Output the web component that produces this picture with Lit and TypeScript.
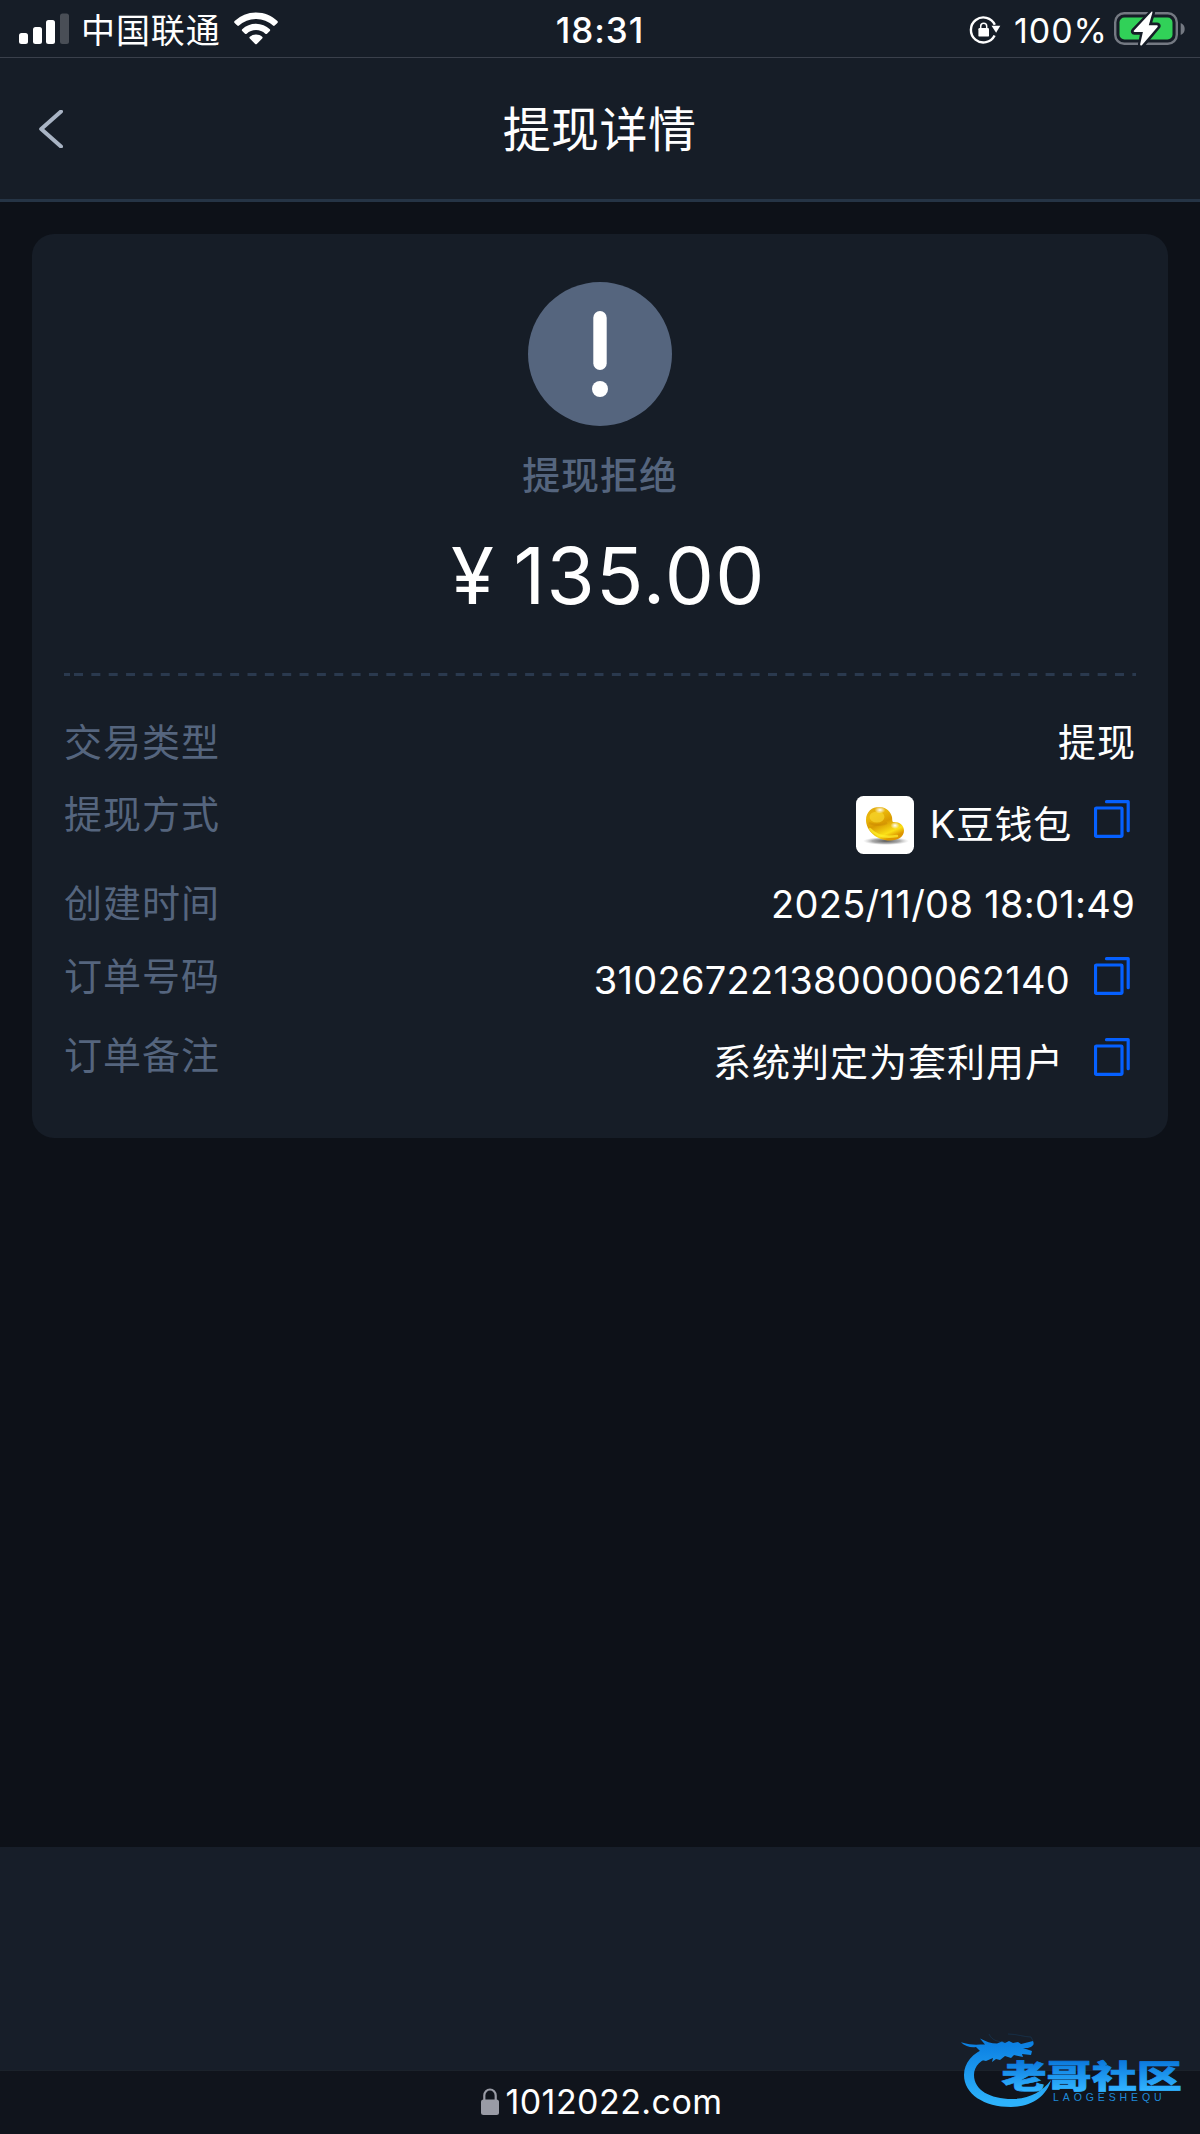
import { css, html, svg, LitElement, nothing } from "lit";
import { customElement, property } from "lit/decorators.js";

@customElement("status-bar")
export class StatusBar extends LitElement {
  render() {
    return html`
      <div class="side">
        <svg class="signal" width="50" height="32" viewBox="0 0 50 32">
          <rect x="0" y="20" width="9" height="11" rx="2.5" />
          <rect x="14" y="14" width="9" height="17" rx="2.5" />
          <rect x="27" y="7" width="9" height="24" rx="2.5" />
          <rect x="41" y="0.5" width="9" height="30.5" rx="2.5" opacity="0.22" />
        </svg>
        <span class="carrier">中国联通</span>
        <svg class="wifi" width="44" height="33" viewBox="0 0 44 33">
          <path d="M22 .5c8.500 0 16 3.300 21.400 8.600.6.600.6 1.200 0 1.800l-2.700 2.700c-.5.500-1.100.5-1.700 0A24.300 24.300 0 0 0 22 6.900 24.300 24.300 0 0 0 5 13.600c-.6.500-1.200.5-1.700 0L.6 10.900c-.6-.6-.6-1.200 0-1.800A30.500 30.500 0 0 1 22 .5z" />
          <path d="M22 11.700c5.400 0 10.200 2.100 13.800 5.500.6.600.6 1.200 0 1.800L33 21.700c-.5.500-1.100.5-1.700 0a13.600 13.600 0 0 0-18.600 0c-.6.500-1.200.5-1.700 0L8.200 19c-.6-.6-.6-1.200 0-1.800a20 20 0 0 1 13.800-5.500z" />
          <path d="M22 22.500c2.400 0 4.600.9 6.200 2.300.6.500.6 1.100 0 1.700l-5.400 5.400c-.5.500-1.100.5-1.600 0l-5.400-5.400c-.6-.6-.6-1.200 0-1.700a9.300 9.300 0 0 1 6.200-2.300z" />
        </svg>
      </div>
      <div class="time">18:31</div>
      <div class="side end">
        <svg class="lock" width="32" height="30" viewBox="0 0 32 30">
          <path d="M25.600 20.500A12.500 12.500 0 1 1 25.800 9.800" fill="none" stroke="#fff" stroke-width="2.400" />
          <path d="M22.500 10.800h8.800l-4.200 7z" />
          <rect x="9.400" y="13" width="10.600" height="8.600" rx="1.200" />
          <path d="M11.700 13.500v-2.300a3 3 0 0 1 6 0v2.300" fill="none" stroke="#fff" stroke-width="1.500" />
        </svg>
        <span class="percent">100%</span>
        <svg class="battery" width="72" height="36" viewBox="0 0 72 36">
          <rect x="1.200" y="2.200" width="61.600" height="30.600" rx="9" fill="none" stroke="#747982" stroke-width="2.400" />
          <rect x="5.500" y="6.500" width="53" height="22" rx="5" fill="#31d158" />
          <path d="M66.700 12v12c2.500-1 4-3.300 4-6s-1.500-5-4-6z" fill="#747982" />
          <path d="M38 .8 19.700 19.800c-.6.700-.3 1.500.6 1.500h8.600L26.500 33c-.2 1.500.9 2 1.900 1l15.400-18.300c.7-.8.3-1.700-.7-1.700h-8.200L38.500 2z" stroke="#161d27" stroke-width="5" />
          <path d="M37.500.8 20 19.600c-.6.700-.3 1.500.6 1.500h8.300L26.200 33c-.2 1.500.9 2 1.900 1l15.400-18.100c.7-.8.3-1.700-.7-1.700h-8L38.300 2c.3-1.300 0-2-.8-1.200z" />
        </svg>
      </div>
    `;
  }

  static get styles() {
    return css`
      :host {
        display: flex;
        align-items: flex-start;
        box-sizing: border-box;
        height: 58px;
        border-bottom: 1px solid #3a404b;
        background: #161d27;
        color: #fff;
        font-size: 34px;
        line-height: 40px;
      }

      svg {
        fill: #fff;
        flex: none;
      }

      .side {
        display: flex;
        flex: 1;
        padding-left: 19px;
      }

      .end {
        justify-content: flex-end;
        padding: 0 14px 0 0;
      }

      .time {
        padding: 10px 5px 0 0;
        font-size: 35px;
        font-weight: 550;
        letter-spacing: 1px;
      }

      .signal {
        margin-top: 13px;
      }

      .carrier {
        width: 140px;
        margin: 11px 13px 0 12px;
        letter-spacing: 0.9px;
        white-space: nowrap;
      }

      .wifi {
        margin-top: 12px;
      }

      .lock {
        margin: 15px 13px 0 0;
      }

      .percent {
        margin: 11px 6px 0 0;
        font-weight: 370;
        letter-spacing: 1px;
      }

      .battery {
        margin-top: 11px;
      }
    `;
  }
}

@customElement("detail-row")
export class DetailRow extends LitElement {
  @property() label = "";
  @property({ type: Boolean }) copy = false;

  render() {
    return html`
      <span class="label">${this.label}</span>
      <span class="value"><slot></slot></span>
      ${this.copy
        ? html`
            <svg width="36" height="38" viewBox="0 0 36 38">
              <rect x="1.500" y="8" width="26.500" height="28.300" rx="0.800" />
              <path d="M12.500 1.700h21.700v29" stroke-linecap="round" stroke-linejoin="round" />
            </svg>
          `
        : nothing}
    `;
  }

  static get styles() {
    return css`
      :host {
        display: flex;
        align-items: flex-start;
        color: #fff;
        font-size: 38px;
        line-height: 54px;
      }

      .label {
        flex: 1;
        color: #55657e;
        letter-spacing: 1px;
      }

      .value {
        display: flex;
        align-items: center;
        margin-top: var(--value-top, 0);
        margin-right: var(--value-right, 0);
        letter-spacing: var(--value-spacing, 0);
      }

      svg {
        margin: var(--icon-top, 0) 6px 0 24px;
        fill: none;
        stroke: #0560ff;
        stroke-width: 3.2;
      }
    `;
  }
}

@customElement("community-mark")
export class CommunityMark extends LitElement {
  render() {
    return svg`
      <svg width="260" height="124" viewBox="0 0 260 124">
        <defs>
          <linearGradient id="ring" x1="0" y1="32" x2="0" y2="92" gradientUnits="userSpaceOnUse">
            <stop offset="0" stop-color="#0b7fe2" />
            <stop offset="1" stop-color="#2db2fb" />
          </linearGradient>
          <linearGradient id="word" x1="0" y1="-27" x2="0" y2="2" gradientUnits="userSpaceOnUse">
            <stop offset="0" stop-color="#0a78dc" />
            <stop offset="1" stop-color="#30b2ff" />
          </linearGradient>
        </defs>
        <path fill="url(#ring)" d="M48 37C32 43 24 53 24 65c0 19 20 32 47 32 20 0 36-11 40-27-9 12-22 19-39 19-22 0-38-9-38-24 0-9 7-16 19-19l9-5z" />
        <path fill="url(#ring)" d="M22 32.500c9 3 15 2 23 2l-5-6c6 3 11 5 17 5l5-2 3 1.500 4-2 4 2 5-1 3 2 12-3c2 4-1 6-5 7h-5l9 3-1 4-9-1 1 3-9-2-3 3-6-2-5 4-4-1-4 3 1-4-7 3-9-2 3-8-4-4c-5 1-11-1-15-4.500z" />
        <path fill="none" stroke="#174b78" stroke-width=".8" opacity=".45" d="M49 24c3 7 10 8 17 8M68 24c9 0 16 3 23 3l2 4" />
        <text class="name" transform="translate(61.500 77.500) scale(1.410 1)" fill="url(#word)" stroke="url(#word)" stroke-width=".7" y="0">老哥社区</text>
        <text class="latin" x="113" y="91">LAOGESHEQU</text>
      </svg>
    `;
  }

  static get styles() {
    return css`
      :host,
      svg {
        display: block;
      }

      .name {
        font: 900 32px "Noto Sans CJK SC", sans-serif;
      }

      .latin {
        fill: #1f8ad8;
        font: 10.5px "Liberation Sans", sans-serif;
        letter-spacing: 3.9px;
      }
    `;
  }
}

@customElement("app-root")
export class AppRoot extends LitElement {
  render() {
    return html`
      <status-bar></status-bar>
      <header>
        <svg class="back" width="24" height="38" viewBox="0 0 24 38">
          <path d="M22 1.500 2.200 19 22 36.500" />
        </svg>
        <h1>提现详情</h1>
      </header>

      <main>
        <section class="card">
          <svg class="alert" width="144" height="144" viewBox="0 0 144 144">
            <circle cx="72" cy="72" r="72" fill="#55657e" />
            <rect x="65.300" y="29" width="13.400" height="59" rx="6.700" fill="#fff" />
            <circle cx="72" cy="107" r="8" fill="#fff" />
          </svg>
          <div class="state">提现拒绝</div>
          <div class="amount"><span class="yen">¥</span><span>135.00</span></div>
          <svg class="divider" width="1072" height="3">
            <line x1="0" y1="1.500" x2="6" y2="1.500" />
            <line class="dashes" x1="10" y1="1.500" x2="1072" y2="1.500" />
          </svg>

          <detail-row class="type" label="交易类型">提现</detail-row>
          <detail-row class="method" label="提现方式" copy>
            <svg class="bean" width="58" height="58" viewBox="0 0 58 58">
              <defs>
                <linearGradient id="gold" x1="0" y1="0" x2="0.500" y2="1">
                  <stop offset="0" stop-color="#e0a810" />
                  <stop offset="0.300" stop-color="#eab70a" />
                  <stop offset="0.550" stop-color="#d99a02" />
                  <stop offset="0.850" stop-color="#fbe016" />
                  <stop offset="1" stop-color="#dd9500" />
                </linearGradient>
                <radialGradient id="shine">
                  <stop offset="0" stop-color="#fff" />
                  <stop offset="1" stop-color="#fff" stop-opacity="0" />
                </radialGradient>
                <radialGradient id="shade">
                  <stop offset="0" stop-color="#555" />
                  <stop offset="0.600" stop-color="#888" stop-opacity="0.700" />
                  <stop offset="1" stop-color="#bbb" stop-opacity="0" />
                </radialGradient>
              </defs>
              <rect width="58" height="58" rx="7.500" fill="#fff" />
              <ellipse cx="30" cy="45" rx="23" ry="4" fill="url(#shade)" />
              <path d="M10 24C10 15 17 10.500 24 11c6.500.5 11 5 12 10 .4 2.500 0 4 1 5 6-.5 11 3 11 8.500 0 6.500-6 10-14 10C20 44.500 10 34 10 24z" fill="url(#gold)" />
              <ellipse cx="21" cy="21" rx="7.500" ry="5.500" fill="#f6d62c" opacity="0.700" />
              <path d="M13 27c5 2 12 3 18 0" fill="none" stroke="#c07c02" stroke-width="2" opacity="0.300" />
              <path d="M14 33c6 7 15 9 27 7" fill="none" stroke="#fff12c" stroke-width="2.500" stroke-linecap="round" opacity="0.700" />
              <ellipse cx="24" cy="14" rx="5.500" ry="3.500" fill="url(#shine)" />
              <ellipse cx="39" cy="29.500" rx="4.500" ry="3.500" fill="url(#shine)" />
            </svg>
            <span class="wallet">K豆钱包</span>
          </detail-row>
          <detail-row class="created" label="创建时间">2025/11/08 18:01:49</detail-row>
          <detail-row class="order" label="订单号码" copy>310267221380000062140</detail-row>
          <detail-row class="remark" label="订单备注" copy>系统判定为套利用户</detail-row>
        </section>
      </main>

      <div class="toolbar"></div>
      <footer>
        <svg width="18" height="27" viewBox="0 0 18 27">
          <rect x="0" y="11.500" width="18" height="15.500" rx="2.500" fill="#999ba5" />
          <path d="M3.300 12.500V7.500a5.700 6 0 0 1 11.400 0v5" fill="none" stroke="#999ba5" stroke-width="2.200" />
        </svg>
        <span>1012022.com</span>
      </footer>
      <community-mark></community-mark>
    `;
  }

  static get styles() {
    return css`
      :host {
        position: relative;
        display: flex;
        flex-direction: column;
        width: 1200px;
        height: 2134px;
        overflow: hidden;
        background: #0d1118;
        color: #fff;
        font-family: Inter, "Noto Sans CJK SC", sans-serif;
      }

      header {
        display: grid;
        grid-template-columns: 100px 1fr 100px;
        align-items: center;
        box-sizing: border-box;
        height: 144px;
        border-bottom: 3px solid #253445;
        background: #161d27;
      }

      .back {
        margin-left: 39px;
        fill: none;
        stroke: #a9b4c4;
        stroke-width: 4;
        stroke-linecap: round;
        stroke-linejoin: round;
      }

      h1 {
        margin: 0;
        padding: 2px 1px 0 0;
        font-size: 48px;
        font-weight: 400;
        line-height: 60px;
        letter-spacing: 0.4px;
        text-align: center;
      }

      main {
        flex: 1;
        padding: 32px;
      }

      .card {
        display: flex;
        flex-direction: column;
        align-items: center;
        box-sizing: border-box;
        height: 904px;
        padding: 48px 32px 0;
        border-radius: 22px;
        background: #161d27;
      }

      .state {
        margin-top: 22px;
        color: #55657e;
        font-size: 38px;
        font-weight: 500;
        line-height: 54px;
        letter-spacing: 0.9px;
      }

      .amount {
        display: flex;
        gap: 18px;
        margin: 25px 0 0 17px;
        font-size: 78px;
        line-height: 98px;
        letter-spacing: 1.4px;
      }

      .yen {
        font-weight: 370;
      }

      .divider {
        margin: 48px 0 39px;
        stroke: #2a394e;
        stroke-width: 3;
      }

      .dashes {
        stroke-dasharray: 9 8.350;
      }

      detail-row {
        width: 100%;
      }

      .type {
        height: 72px;
        --value-spacing: 1px;
      }

      .method {
        height: 89px;
        --value-top: 9px;
        --value-right: -2px;
        --value-spacing: 0.7px;
        --icon-top: 13px;
      }

      .bean {
        margin-right: 16px;
      }

      .wallet {
        margin-top: -3px;
      }

      .created {
        height: 73px;
        --value-top: 1px;
        --value-right: 1px;
        --value-spacing: 0.3px;
      }

      .order {
        height: 79px;
        --value-top: 4px;
        --value-spacing: 0.27px;
        --icon-top: 8px;
      }

      .remark {
        height: 60px;
        --value-top: 7px;
        --value-right: 6px;
        --value-spacing: 1px;
        --icon-top: 10px;
      }

      .toolbar {
        height: 223px;
        background: #171e29;
      }

      footer {
        display: flex;
        align-items: center;
        justify-content: center;
        gap: 6px;
        box-sizing: border-box;
        height: 64px;
        padding: 0 0 2px 4px;
        border-top: 1px solid #1b222b;
        background: #10141c;
        font-size: 34px;
        line-height: 40px;
        letter-spacing: 0.45px;
      }

      community-mark {
        position: absolute;
        right: 0;
        bottom: 0;
      }
    `;
  }
}
